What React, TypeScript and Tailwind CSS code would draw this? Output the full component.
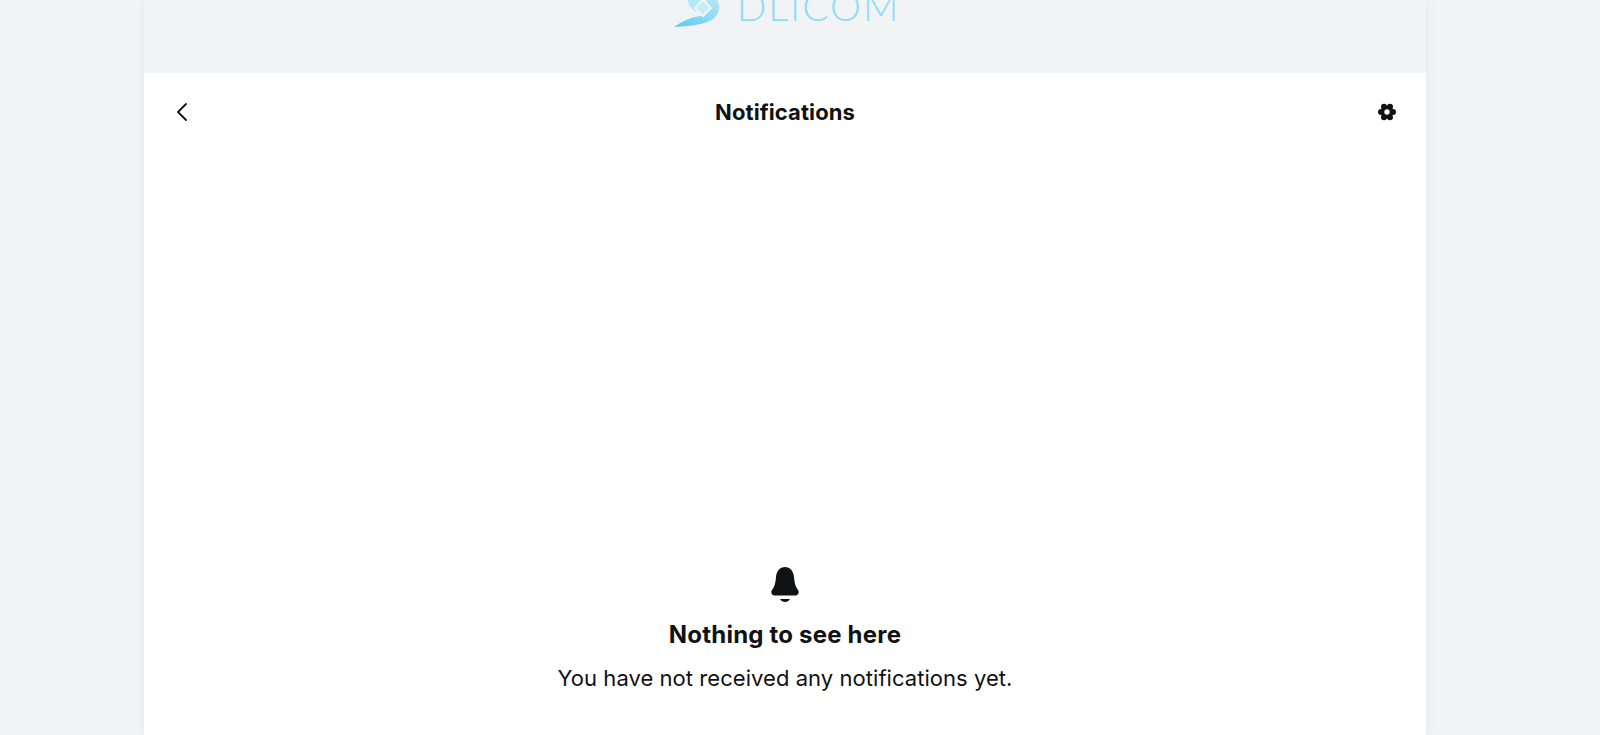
export default function App() {
  return (
    <div className="h-[735px] overflow-hidden bg-[#f3f4f6] font-['Inter','Liberation_Sans',sans-serif] text-[#111214]">
      <div className="ml-[144px] mr-[174px] flex h-full flex-col shadow-[0_0_10px_rgba(0,0,0,0.07)]">
        <header className="flex h-[73px] items-end justify-center overflow-hidden bg-[#f2f3f5] pb-[46px] pl-[4px]">
          <div className="flex items-end gap-[16px]">
            <svg width="47" height="27" viewBox="0 0 47 27" className="shrink-0">
              <defs>
                <linearGradient id="g" x1="0" y1="1" x2="1" y2="0">
                  <stop offset="0" stopColor="#5cc8ee" />
                  <stop offset="0.6" stopColor="#8fdcf5" />
                  <stop offset="1" stopColor="#b5e8f8" />
                </linearGradient>
              </defs>
              <path d="M0 27C10 20 18 17 27 16L36 8L32 0H43C46 4 46 10 43 15C37 24 20 26 0 27Z" fill="url(#g)" />
              <path d="M14 0H28L21 8L24 12C18 11 14 5 14 0Z" fill="#b5e8f8" />
              <path d="M29 0L37 8L29 16L21 8Z" fill="#c5ecf9" stroke="#f2f3f5" strokeWidth="2" />
            </svg>
            <span className="mb-[1px] font-['Lato',sans-serif] text-[39px] font-light leading-none tracking-[2px] text-[#8fdcf5]">DLICOM</span>
          </div>
        </header>
        <main className="flex min-h-0 flex-1 flex-col bg-white">
          <div className="flex h-[78px] items-center justify-between pl-[31px] pr-[30px]">
            <svg width="14" height="20" viewBox="0 0 14 20" fill="none" stroke="#111214" strokeWidth="1.8" strokeLinecap="round" strokeLinejoin="round">
              <path d="M11 2 L3 10 L11 18" />
            </svg>
            <h1 className="pl-[3px] text-[22px] font-bold leading-none tracking-[0.1px]">Notifications</h1>
            <svg width="18" height="18" viewBox="0 0 24 24" fill="#111214" fillRule="evenodd">
              <circle cx="12" cy="12" r="8.500" />
              <circle cx="8" cy="5" r="4" />
              <circle cx="16" cy="5" r="4" />
              <circle cx="20" cy="12" r="4" />
              <circle cx="16" cy="19" r="4" />
              <circle cx="8" cy="19" r="4" />
              <circle cx="4" cy="12" r="4" />
              <circle cx="12" cy="12" r="3.600" fill="#ffffff" />
            </svg>
          </div>
          <div className="flex flex-1 flex-col items-center justify-end pb-[41px]">
            <svg width="28" height="36" viewBox="0 0 28 36" fill="#111214">
              <path d="M14 0C19 0 22.500 4 23 10C23.500 16 24.500 20 27 23C28.500 25 27.500 28 25 28.500H3C.5 28-.5 25 1 23C3.500 20 4.500 16 5 10C5.500 4 9 0 14 0Z" />
              <path d="M9 32h10c-1 2-3 3-5 3s-4-1-5-3Z" />
            </svg>
            <h2 className="mt-[14px] text-[24px] font-bold leading-[36px] tracking-[0.2px]">Nothing to see here</h2>
            <p className="mt-[9px] text-[22px] leading-[32px] tracking-[0.05px]">You have not received any notifications yet.</p>
          </div>
        </main>
      </div>
    </div>
  );
}
